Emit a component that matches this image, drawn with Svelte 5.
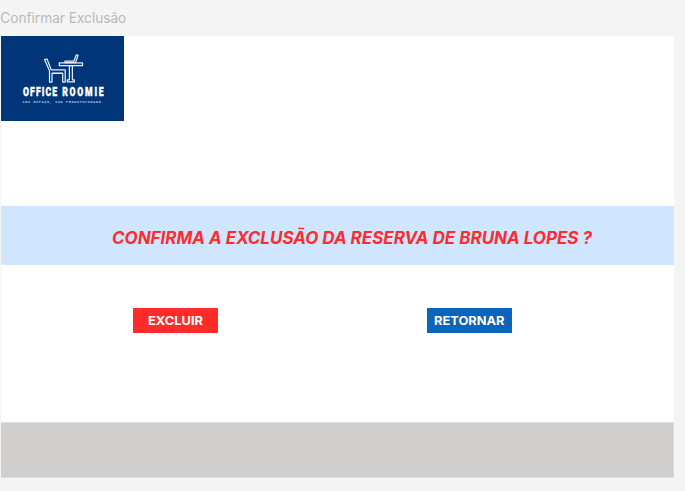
<script>
  const label = 'Confirmar Exclusão';
  const guest = 'BRUNA LOPES';
</script>

<main>
  <header><svg width="140" height="36"><text x="0.3" y="23" textLength="126" lengthAdjust="spacingAndGlyphs">{label}</text></svg></header>
  <section class="frame">
    <div class="brand">
      <svg width="123" height="85" viewBox="1 36 123 85" role="img" aria-label="Office Roomie">
        <g class="furniture">
          <path d="M44.5 59.6 47 59l4.2 10.8h14v12.2h-2.5v-8.7H52v8.7h-2.5V70.8z" />
          <path d="M52 73.2h10.8" />
          <path d="M59.3 62.9h23.2v2.7H59.3z" />
          <path d="M69.4 65.6h3v14.2h1.9v2.1h-7v-2.1h2.1z" />
          <path d="M65 62.7v-1.6h8.9l2.4-6.2 1.8.5-2.7 7.3z" />
        </g>
        <text class="name" transform="translate(23 96) scale(.72 1)" textLength="47.5">OFFICE</text>
        <text class="name" transform="translate(62.2 96) scale(.72 1)" textLength="57.5">ROOMIE</text>
        <text class="slogan" x="22.5" y="102.7" textLength="81">SEU ESPAÇO, SUA PRODUTIVIDADE.</text>
      </svg>
    </div>
    <div class="question">
      <svg width="672" height="59"><text x="111" y="38" textLength="480" lengthAdjust="spacingAndGlyphs">CONFIRMA A EXCLUSÃO DA RESERVA DE {guest} ?</text></svg>
    </div>
    <div class="actions">
      <button class="delete"><svg width="85" height="25"><text x="15" y="17" textLength="55" lengthAdjust="spacingAndGlyphs">EXCLUIR</text></svg></button>
      <button class="back"><svg width="85" height="25"><text x="7" y="17" textLength="70.5" lengthAdjust="spacingAndGlyphs">RETORNAR</text></svg></button>
    </div>
    <footer></footer>
  </section>
</main>

<style>
  :global(body) { margin: 0; background: #f4f4f4; }
  main { height: 491px; font-family: Inter, sans-serif; font-optical-sizing: none; overflow: hidden; }
  svg { display: block; }
  header { height: 36px; }
  header text { font-size: 14px; fill: #b9b9b9; }
  .frame { width: 672.5px; height: 442px; margin-left: 1px; background: #fff; display: flex; flex-direction: column; }
  .brand { width: 123px; height: 85px; background: #003579; }
  .furniture { fill: none; stroke: #e4edf7; stroke-width: 1.25; stroke-linejoin: round; }
  .name { font: 900 12px Roboto, sans-serif; fill: #fff; stroke: #fff; stroke-width: .4; }
  .slogan { font: 700 3.4px "Liberation Mono", monospace; fill: #b8cce2; }
  .question { height: 59px; margin-top: 85px; background: #d0e6ff; }
  .question text { font: italic 700 17px Inter, sans-serif; font-optical-sizing: none; fill: #ff2b2d; }
  .actions { display: flex; gap: 208.5px; margin: 43px 0 0 132px; }
  button { width: 85px; height: 25px; padding: 0; border: 0; color: #fff; }
  button text { font: 700 12px Inter, sans-serif; font-optical-sizing: none; fill: #fff; }
  .delete { background: #ff2a2a; }
  .back { background: #0b65ba; }
  footer { box-sizing: border-box; height: 56px; margin-top: auto; background: #d0cfcd; border: 1px solid #dddcdb; border-left: 0; }
</style>
